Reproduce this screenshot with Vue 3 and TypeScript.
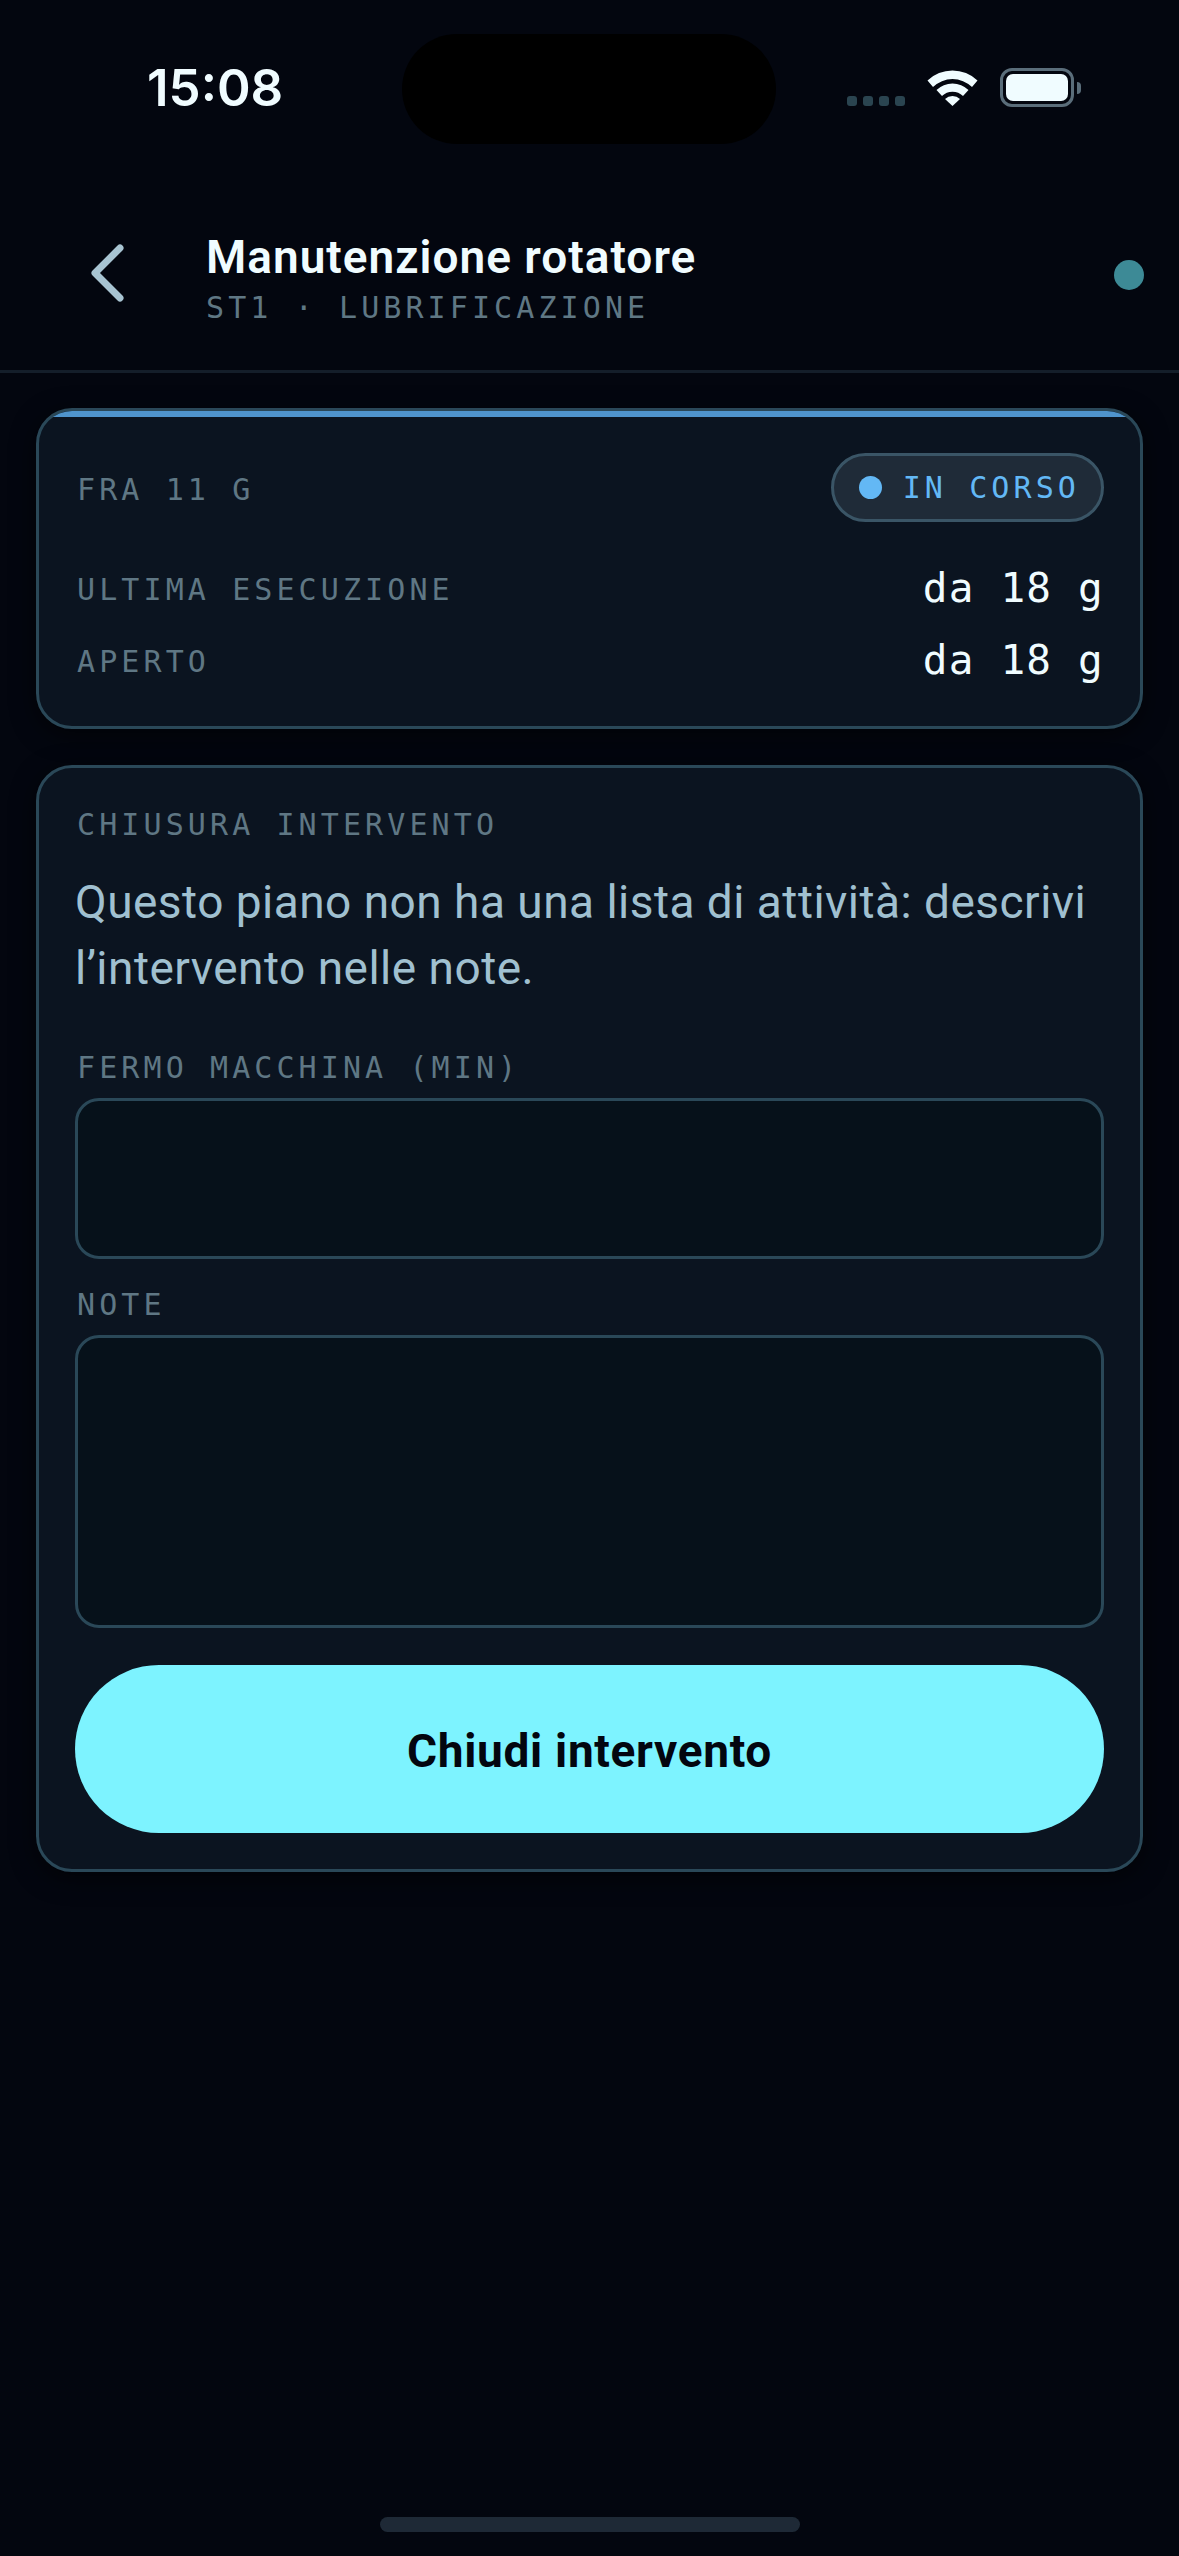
<template>
  <div class="screen">
    <div class="status-bar">
      <span class="time">15:08</span>
      <div class="island"></div>
      <div class="status-icons">
        <div class="signal">
          <i v-for="n in 4" :key="n"></i>
        </div>
        <svg class="wifi" width="51" height="37" viewBox="0 0 51 37">
          <path d="M0.5 11.5 A36 36 0 0 1 50.5 11.5 L45 18 A28 28 0 0 0 6 18 Z" fill="#f0fcff" />
          <path d="M9.5 21 A23 23 0 0 1 41.5 21 L36 27 A15 15 0 0 0 15 27 Z" fill="#f0fcff" />
          <path d="M18 30 A11 11 0 0 1 33 30 L25.5 37 Z" fill="#f0fcff" />
        </svg>
        <div class="battery">
          <div class="battery-fill"></div>
        </div>
        <div class="battery-tip"></div>
      </div>
    </div>

    <header class="top-bar">
      <button class="back" type="button" aria-label="Indietro">
        <svg width="36" height="60" viewBox="0 0 36 60">
          <path d="M29 5 L4 30 L29 55" fill="none" stroke="#a8c4d2" stroke-width="7" stroke-linecap="round" stroke-linejoin="round" />
        </svg>
      </button>
      <div class="heading">
        <div class="title">{{ title }}</div>
        <div class="subtitle">{{ subtitle }}</div>
      </div>
      <span class="live-dot"></span>
    </header>

    <main class="content">
      <section class="card summary">
        <div class="accent"></div>
        <div class="summary-head">
          <span class="label">FRA 11 G</span>
          <span class="pill"><i class="pill-dot"></i>IN CORSO</span>
        </div>
        <div v-for="row in rows" :key="row.label" class="row">
          <span class="label">{{ row.label }}</span>
          <span class="value">{{ row.value }}</span>
        </div>
      </section>

      <section class="card closing">
        <div class="label">CHIUSURA INTERVENTO</div>
        <p class="hint">Questo piano non ha una lista di attività: descrivi l’intervento nelle note.</p>
        <label class="label field-label" for="fermo">FERMO MACCHINA (MIN)</label>
        <input id="fermo" class="field field-input" type="text" />
        <label class="label field-label note-label" for="note">NOTE</label>
        <textarea id="note" class="field field-area"></textarea>
        <button class="submit" type="button">Chiudi intervento</button>
      </section>
    </main>

    <div class="home-indicator"></div>
  </div>
</template>

<script setup lang="ts">
const title = 'Manutenzione rotatore'
const subtitle = 'ST1 · LUBRIFICAZIONE'

const rows = [
  { label: 'ULTIMA ESECUZIONE', value: 'da 18 g' },
  { label: 'APERTO', value: 'da 18 g' },
]
</script>

<style>
html,
body {
  margin: 0;
  background: #03060f;
}
</style>

<style scoped>
.screen {
  position: relative;
  width: 1179px;
  height: 2556px;
  overflow: hidden;
  background: #03060f;
  font-family: Roboto, sans-serif;
}

/* status bar */
.status-bar {
  position: relative;
  display: flex;
  justify-content: space-between;
  align-items: flex-start;
  height: 120px;
  padding: 0 98px 0 147px;
  box-sizing: border-box;
}

.time {
  margin-top: 58px;
  font-family: Inter, sans-serif;
  font-size: 51px;
  line-height: 60px;
  font-weight: 600;
  color: #f0fcff;
}

.island {
  position: absolute;
  left: 402px;
  top: 34px;
  width: 374px;
  height: 110px;
  border-radius: 55px;
  background: #000;
}

.status-icons {
  display: flex;
  align-items: flex-end;
  margin-top: 68px;
  height: 39px;
}

.signal {
  display: flex;
  gap: 6px;
  margin-right: 22px;
  margin-bottom: 1px;
}

.signal i {
  width: 10px;
  height: 10px;
  border-radius: 3px;
  background: #2a4450;
}

.wifi {
  margin-right: 22px;
  margin-bottom: 1px;
}

.battery {
  width: 74px;
  height: 39px;
  box-sizing: border-box;
  padding: 3px;
  border: 3px solid #5a6d7a;
  border-radius: 12px;
}

.battery-fill {
  height: 100%;
  border-radius: 7px;
  background: #f0fcff;
}

.battery-tip {
  align-self: center;
  width: 4px;
  height: 12px;
  margin-left: 3px;
  border-radius: 0 6px 6px 0;
  background: #5a6d7a;
}

/* header */
.top-bar {
  display: flex;
  align-items: center;
  height: 256px;
  margin-top: -3px;
  padding: 62px 35px 0 91px;
  box-sizing: border-box;
  border-bottom: 3px solid #141e2a;
}

.back {
  display: flex;
  width: 115px;
  margin-top: -3px;
  padding: 0;
  border: 0;
  background: none;
}

.heading {
  flex: 1;
  margin-top: 6px;
}

.title {
  font-size: 46px;
  line-height: 58px;
  font-weight: 600;
  letter-spacing: 1px;
  color: #f0fcff;
}

.subtitle {
  margin-top: 2px;
  font-family: "DejaVu Sans Mono", monospace;
  font-size: 30px;
  line-height: 40px;
  letter-spacing: 4.1px;
  color: #5f7784;
}

.live-dot {
  width: 30px;
  height: 30px;
  border-radius: 50%;
  background: #3d8a96;
}

/* cards */
.content {
  display: flex;
  flex-direction: column;
  gap: 36px;
  padding: 35px 36px 0;
}

.card {
  position: relative;
  box-sizing: border-box;
  overflow: hidden;
  padding: 0 36px;
  border: 3px solid #2a4858;
  border-radius: 36px;
  background: #0b1420;
  box-shadow: 0 6px 24px rgba(0, 0, 0, 0.6);
}

.label {
  display: block;
  padding: 3px 0 0 2px;
  font-family: "DejaVu Sans Mono", monospace;
  font-size: 30px;
  line-height: 33px;
  letter-spacing: 4.1px;
  color: #5f7784;
}

.summary {
  padding-bottom: 30px;
}

.accent {
  height: 6px;
  margin: 0 -36px;
  background: #4f94cc;
}

.summary-head {
  display: flex;
  justify-content: space-between;
  align-items: center;
  margin-top: 36px;
  margin-bottom: 30px;
}

.pill {
  display: flex;
  align-items: center;
  gap: 21px;
  height: 69px;
  padding: 0 21px 0 25px;
  box-sizing: border-box;
  border: 3px solid #3a5566;
  border-radius: 35px;
  background: #1f2b38;
  font-family: "DejaVu Sans Mono", monospace;
  font-size: 30px;
  letter-spacing: 4.1px;
  color: #63b8f5;
}

.pill-dot {
  width: 23px;
  height: 23px;
  border-radius: 50%;
  background: #63b8f5;
}

.row {
  display: flex;
  justify-content: space-between;
  align-items: center;
  height: 72px;
}

.value {
  font-family: "DejaVu Sans Mono", monospace;
  font-size: 41px;
  letter-spacing: 1.2px;
  color: #f0fcff;
}

.closing {
  padding-top: 37px;
  padding-bottom: 36px;
}

.hint {
  margin: 28px 0 0;
  font-size: 46px;
  line-height: 66px;
  letter-spacing: 0.48px;
  color: #a0c0d0;
}

.field-label {
  margin-top: 47px;
}

.note-label {
  margin-top: 26px;
}

.field {
  display: block;
  width: 100%;
  margin: 14px 0 0;
  padding: 0;
  box-sizing: border-box;
  border: 3px solid #2a4858;
  border-radius: 24px;
  background: #06111a;
  outline: none;
  resize: none;
}

.field-input {
  height: 161px;
}

.field-area {
  height: 293px;
}

.submit {
  display: block;
  width: 100%;
  height: 168px;
  margin-top: 37px;
  padding: 3px 0 0;
  border: 0;
  border-radius: 84px;
  background: #7df3ff;
  font-family: Roboto, sans-serif;
  font-size: 46px;
  font-weight: 700;
  letter-spacing: 0.67px;
  color: #03060f;
}

.home-indicator {
  position: absolute;
  left: 380px;
  top: 2517px;
  width: 420px;
  height: 15px;
  border-radius: 8px;
  background: #1e2936;
}
</style>
